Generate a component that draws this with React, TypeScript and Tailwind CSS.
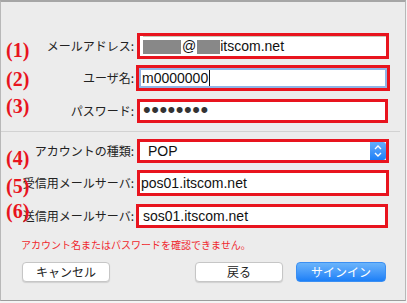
import React from 'react';

const jp = { fontFamily: '"Noto Sans CJK JP", sans-serif' };
const en = { fontFamily: '"Liberation Sans", "Noto Sans CJK JP", sans-serif' };

function Marker({ n, top }: { n: number; top: string }) {
  return (
    <span
      className={`absolute left-[5px] ${top} text-[20px] font-bold leading-none text-[#e8141e]`}
      style={{ fontFamily: '"Liberation Serif", serif' }}
    >
      ({n})
    </span>
  );
}

function Row({ label, children, className }: { label: string; children: React.ReactNode; className: string }) {
  return (
    <div className="flex items-center">
      <div className="w-[133px] shrink-0 text-right text-[12px] text-[#222]" style={jp}>
        {label}
      </div>
      <div className={`border-[3px] border-[#e8141e] bg-white flex items-center ${className}`}>{children}</div>
    </div>
  );
}

export default function App() {
  return (
    <div className="w-[407px] h-[303px] bg-[#f4f4f4]">
      <div className="relative w-[406px] h-[301px] bg-[#ececec] border-t-2 border-t-[#a6a6a6] border-x border-x-[#b8b8b8] border-b border-b-[#9c9c9c] flex flex-col">
        <div className="flex flex-col pt-[31px] gap-[6px]">
          <Row label="メールアドレス:" className="ml-[3px] w-[252px] h-[26px] pl-[3px]">
            <div className="flex-1 h-full flex items-center border-t border-[#c8c8b8] text-[14px] text-[#111]" style={en}>
              <span className="w-[38px] h-[14px] bg-[#888]" />
              <span className="ml-px">@</span>
              <span className="ml-px w-[23px] h-[14px] bg-[#888]" />
              <span>itscom.net</span>
            </div>
          </Row>
          <Row label="ユーザ名:" className="ml-[2px] w-[254px] h-[26px]">
            <div className="flex-1 h-full flex items-center border-2 border-[#8fb4e6] pl-px text-[14px] text-[#111]" style={en}>
              m0000000
              <span className="ml-px w-px h-[16px] bg-[#111]" />
            </div>
          </Row>
        </div>
        <div className="flex flex-col mt-[8px]">
          <Row label="パスワード:" className="ml-[3px] w-[251px] h-[24px] pl-[3px]">
            <span className="text-[22px] leading-none tracking-[0.5px] text-[#333] -mt-[2px]" style={en}>
              ••••••••
            </span>
          </Row>
        </div>
        <div className="mt-[8px] h-px w-[399px] bg-[#d2d2d2]" />
        <div className="flex flex-col mt-[7px] gap-[7px]">
          <Row label="アカウントの種類:" className="ml-[3px] w-[252px] h-[24px]">
            <span className="flex-1 pl-[8px] text-[14px] text-[#111]" style={en}>
              POP
            </span>
            <span className="w-[16px] h-full rounded-r-[3px] bg-linear-to-b from-[#62adfc] to-[#1b7ff6] flex items-center justify-center">
              <svg width="10" height="14" viewBox="0 0 10 14" fill="none" stroke="#fff" strokeWidth="1.4">
                <path d="M2 5l3-3 3 3M2 9l3 3 3-3" />
              </svg>
            </span>
          </Row>
          <Row label="受信用メールサーバ:" className="ml-[3px] w-[252px] h-[26px] pl-[1px]">
            <span className="text-[14px] text-[#111]" style={en}>
              pos01.itscom.net
            </span>
          </Row>
        </div>
        <div className="flex flex-col mt-[8px]">
          <Row label="送信用メールサーバ:" className="ml-[2px] w-[252px] h-[24px] pl-[4px]">
            <span className="text-[14px] text-[#111]" style={en}>
              sos01.itscom.net
            </span>
          </Row>
        </div>
        <p className="mt-[10px] pl-[20px] text-[10px] leading-[14px] text-[#f0282e]" style={jp}>
          アカウント名またはパスワードを確認できません。
        </p>
        <div className="mt-[10px] flex items-center pl-[21px]">
          <button className="w-[88px] h-[20px] rounded-[4px] bg-white border border-[#c6c6c6] shadow-[0_1px_1px_rgba(0,0,0,0.12)] text-[12px] text-[#222]" style={jp}>
            キャンセル
          </button>
          <button className="ml-[85px] w-[88px] h-[20px] rounded-[4px] bg-white border border-[#c6c6c6] shadow-[0_1px_1px_rgba(0,0,0,0.12)] text-[12px] text-[#222]" style={jp}>
            戻る
          </button>
          <button className="ml-[13px] w-[90px] h-[20px] rounded-[4px] bg-linear-to-b from-[#6ab4fb] to-[#1a7ff7] border border-[#3b8ff2] text-[12px] text-white" style={jp}>
            サインイン
          </button>
        </div>
        <Marker n={1} top="top-[38px]" />
        <Marker n={2} top="top-[67px]" />
        <Marker n={3} top="top-[94px]" />
        <Marker n={4} top="top-[146px]" />
        <Marker n={5} top="top-[174px]" />
        <Marker n={6} top="top-[199px]" />
      </div>
    </div>
  );
}
